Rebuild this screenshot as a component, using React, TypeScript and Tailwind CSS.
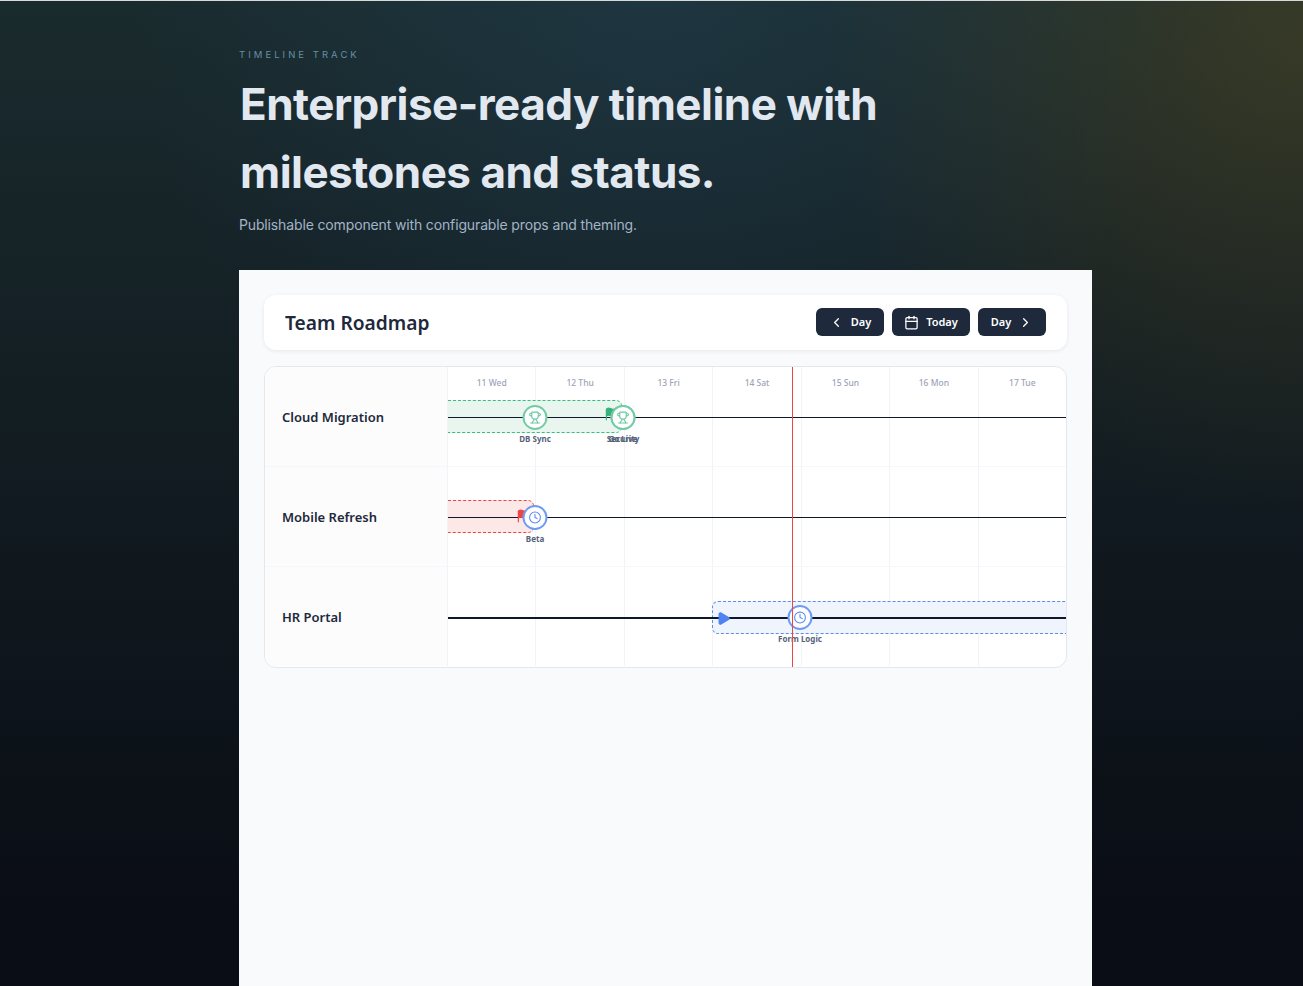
import React from "react";
import { Calendar, ChevronLeft, ChevronRight, Clock, Flag, Play, Trophy } from "lucide-react";

const days = ["11 Wed", "12 Thu", "13 Fri", "14 Sat", "15 Sun", "16 Mon", "17 Tue"];

const NavButton = ({ width, children }: { width: string; children: React.ReactNode }) => (
  <button className={`flex h-7 items-center justify-center gap-[7px] rounded-md bg-[#1e293b] text-[11px] font-semibold text-white ${width}`}>
    {children}
  </button>
);

const Milestone = ({ left, label, color, icon }: { left: string; label: string; color: string; icon: React.ReactNode }) => (
  <div className={`absolute top-[38px] z-10 flex w-[25px] -translate-x-1/2 flex-col items-center gap-[3px] ${left}`}>
    <div className={`flex h-[25px] w-[25px] items-center justify-center rounded-full border-2 bg-white ${color}`}>{icon}</div>
    <div className="whitespace-nowrap text-[8px] font-bold leading-[11px] text-[#56627a]">{label}</div>
  </div>
);

// one lane of the roadmap: name on the left, day cells behind the free canvas on the right
const Row = ({ name, header, className, children }: { name: string; header?: boolean; className?: string; children: React.ReactNode }) => (
  <div className={`grid h-[100px] grid-cols-[182px_1fr] border-b ${className ?? ""}`}>
    <div className="flex items-center bg-[#fcfcfd] pl-[17px] pt-[3px] text-[13px] font-semibold text-[#1e293b]">{name}</div>
    <div className="relative">
      <div className="grid h-full grid-cols-7">
        {days.map((day) => (
          <div key={day} className="border-l border-[#f1f3f8] pt-[9px] text-center text-[8.5px] font-medium leading-[14px] text-[#9ca3b8]">
            {header ? day : null}
          </div>
        ))}
      </div>
      {children}
    </div>
  </div>
);

export default function App() {
  return (
    <div className="min-h-[986px] overflow-hidden border-t border-[#d9d9d9] bg-[#0a0e17] bg-[radial-gradient(circle_at_50%_0%,rgba(50,105,150,0.18),transparent_520px),radial-gradient(circle_at_100%_4%,rgba(190,130,10,0.18),transparent_480px),linear-gradient(180deg,#1a2b2e_0%,#0a0d15_92%)] font-['Noto_Sans',sans-serif]">
      <div className="ml-[239px] w-[853px] pt-[47px]">
        <div className="font-['Inter',sans-serif] text-[9.5px] uppercase leading-[14px] tracking-[0.32em] text-[#6590a6]">
          Timeline Track
        </div>
        <h1 className="mt-2 w-[700px] pl-px font-['Inter',sans-serif] text-[44px] font-bold leading-[68px] tracking-[-0.012em] text-[#e2e8f0]">
          Enterprise-ready timeline with milestones and status.
        </h1>
        <p className="mt-2 font-['Inter',sans-serif] text-[14px] leading-[22px] tracking-[-0.01em] text-[#a3b4c6]">
          Publishable component with configurable props and theming.
        </p>

        <div className="mt-[34px] h-[716px] bg-[#f8fafc] px-[25px] pt-[25px]">
          <div className="flex h-[55px] items-center justify-between rounded-xl bg-white px-[21px] shadow-[0_1px_4px_rgba(15,23,42,0.08)]">
            <div className="pt-[2px] text-[19.2px] font-semibold text-[#1e293b]">Team Roadmap</div>
            <div className="flex gap-2 pb-px">
              <NavButton width="w-[68px]">
                <ChevronLeft size={15} />
                Day
              </NavButton>
              <NavButton width="w-[78px]">
                <Calendar size={15} />
                Today
              </NavButton>
              <NavButton width="w-[68px]">
                Day
                <ChevronRight size={15} />
              </NavButton>
            </div>
          </div>

          <div className="relative mt-4 overflow-hidden rounded-xl border border-[#e2e8f0] bg-white">
            <Row name="Cloud Migration" header className="border-[#f6f7fa]">
              <div className="absolute left-px top-[33px] h-[33px] w-[174px] rounded-r-md border-y border-r border-dashed border-[#34c07c] bg-[#e9f6ef]" />
              <div className="absolute left-px right-0 top-[50px] h-px bg-[#111827]" />
              <Flag size={14} fill="#34b27b" className="absolute left-[157px] top-[40px] text-[#34b27b]" />
              <Milestone left="left-[88px]" label="DB Sync" color="border-[#74cba5] text-[#6cc9a1]" icon={<Trophy size={13} />} />
              <Milestone left="left-[176px]" label="Security" color="border-[#74cba5] text-[#6cc9a1]" icon={<Trophy size={13} />} />
              <Milestone left="left-[176px]" label="Go Live" color="border-[#74cba5] text-[#6cc9a1]" icon={<Trophy size={13} />} />
            </Row>

            <Row name="Mobile Refresh" className="border-[#f6f7fa]">
              <div className="absolute left-px top-[33px] h-[33px] w-[86px] rounded-r-md border-y border-r border-dashed border-[#ef4444] bg-[#fde8e8]" />
              <div className="absolute left-px right-0 top-[50px] h-px bg-[#111827]" />
              <Flag size={14} fill="#ef4444" className="absolute left-[69px] top-[42px] text-[#ef4444]" />
              <Milestone left="left-[88px]" label="Beta" color="border-[#6f9cf2] text-[#5b8def]" icon={<Clock size={13} />} />
            </Row>

            <Row name="HR Portal" className="border-transparent">
              <div className="absolute left-[265px] right-0 top-[34px] h-[33px] rounded-l-md border-y border-l border-dashed border-[#5b8def] bg-[#eff4fd]" />
              <div className="absolute left-px right-0 top-[50px] h-[2px] bg-[#0f172a]" />
              <Play size={15} fill="#4f83f1" className="absolute left-[269px] top-[44px] text-[#4f83f1]" />
              <Milestone left="left-[353px]" label="Form Logic" color="border-[#6f9cf2] text-[#5b8def]" icon={<Clock size={13} />} />
            </Row>

            <div className="absolute bottom-0 left-[527px] top-0 z-20 w-px bg-[#ef4444]" />
          </div>
        </div>
      </div>
    </div>
  );
}
